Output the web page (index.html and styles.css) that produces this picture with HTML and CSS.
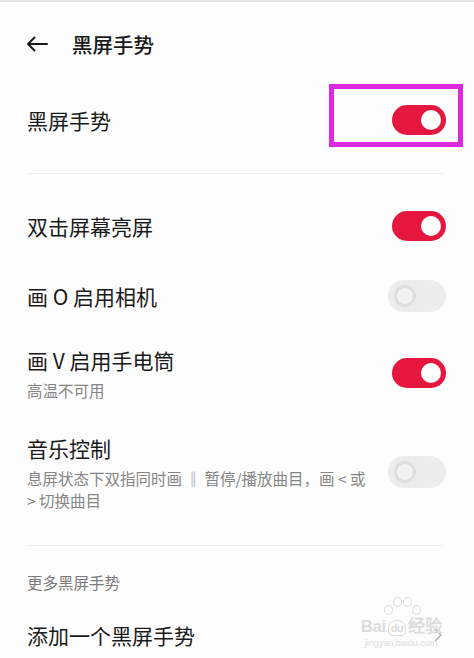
FILE: index.html
```html
<!DOCTYPE html>
<html lang="zh-CN">
<head>
<meta charset="UTF-8">
<meta name="viewport" content="width=device-width, initial-scale=1.0">
<title>黑屏手势</title>
<link rel="stylesheet" href="styles.css">
</head>
<body>
<header class="topbar">
  <svg class="back" width="22" height="16" viewBox="0 0 22 16">
    <path d="M21 8H2M8.5 1.5L2 8l6.5 6.5" fill="none" stroke="#1a1a1a" stroke-width="2" stroke-linecap="round" stroke-linejoin="round"/>
  </svg>
  <h1>黑屏手势</h1>
</header>
<main>
  <div class="row main-row">
    <span class="title">黑屏手势</span>
    <span class="switch on"></span>
    <span class="mark"></span>
  </div>
  <hr class="divider">
  <div class="row">
    <span class="title">双击屏幕亮屏</span>
    <span class="switch on"></span>
  </div>
  <div class="row">
    <span class="title">画 O 启用相机</span>
    <span class="switch off"></span>
  </div>
  <div class="row tall">
    <div class="text">
      <div class="title">画 V 启用手电筒</div>
      <div class="sub">高温不可用</div>
    </div>
    <span class="switch on"></span>
  </div>
  <div class="row tall">
    <div class="text">
      <div class="title">音乐控制</div>
      <div class="sub">息屏状态下双指同时画 ‖ 暂停/播放曲目，画 &lt; 或 &gt; 切换曲目</div>
    </div>
    <span class="switch off"></span>
  </div>
  <hr class="divider second">
  <div class="section-label">更多黑屏手势</div>
  <div class="row link-row">
    <span class="title">添加一个黑屏手势</span>
    <svg class="chevron" width="8" height="14" viewBox="0 0 8 14">
      <path d="M1 1l6 6-6 6" fill="none" stroke="#b0b0b0" stroke-width="1.5"/>
    </svg>
    <div class="watermark">
      <div class="paw">
        <i></i><i></i><i></i><i></i>
      </div>
      <div class="wm-logo">Bai<span class="du">du</span>经验</div>
      <div class="wm-url">jingyan.baidu.com</div>
    </div>
  </div>
</main>
</body>
</html>
```

FILE: styles.css
```css
body {
  margin: 0;
  background: #fdfdfd;
  color: #1a1a1a;
  font-family: "Noto Sans CJK SC", "Noto Sans", sans-serif;
  border-top: 2px solid #e6e6e6;
}
.topbar {
  height: 84px;
  display: flex;
  align-items: center;
  padding-left: 26px;
}
.back {
  margin-right: 24px;
}
.topbar h1 {
  margin: 0;
  font-size: 20.5px;
  font-weight: 500;
  line-height: 30px;
}
main {
  padding: 0 28px 0 27px;
}
.row {
  display: flex;
  align-items: center;
  justify-content: space-between;
  height: 70px;
  position: relative;
}
.main-row {
  height: 68px;
}
.title {
  font-size: 21px;
  line-height: 30px;
}
.row.tall {
  height: auto;
  padding: 14px 0;
}
.row.tall + .row.tall {
  padding: 18px 0 15px;
}
.text {
  width: 347px;
}
.sub {
  margin-top: 4px;
  font-size: 15.5px;
  line-height: 22px;
  color: #858585;
}
.switch {
  flex: none;
  width: 54px;
  height: 30px;
  border-radius: 15px;
  position: relative;
}
.switch::after {
  content: "";
  position: absolute;
  top: 5px;
  width: 20px;
  height: 20px;
  border-radius: 50%;
  box-sizing: border-box;
}
.switch.on {
  background: #e5173e;
}
.switch.on::after {
  right: 5px;
  background: #fff;
}
.switch.off {
  width: 58px;
  height: 32px;
  border-radius: 16px;
  background: #ececec;
}
.switch.off::after {
  top: 5px;
  left: 6px;
  width: 22px;
  height: 22px;
  background: #f2f2f2;
  border: 3px solid #dedede;
}
.mark {
  position: absolute;
  right: -17px;
  top: -2px;
  width: 124px;
  height: 53px;
  border: 5px solid #dd2ae0;
}
.divider {
  margin: 19px 3px 17px 0;
  border: none;
  border-top: 1px solid #efefef;
}
.divider.second {
  margin: 19px 3px 25px 0;
}
.section-label {
  font-size: 15.5px;
  line-height: 22px;
  color: #7a7a7a;
}
.link-row {
  height: 64px;
  margin-top: 10px;
}
.chevron {
  margin-right: 4px;
}
.watermark {
  position: absolute;
  right: 0;
  top: -8px;
  width: 90px;
  color: #dcdcdc;
  text-align: center;
  pointer-events: none;
}
.paw {
  height: 22px;
  position: relative;
}
.paw i {
  position: absolute;
  width: 7px;
  height: 8px;
  border: 1.5px solid #dedede;
  border-radius: 50%;
}
.paw i:nth-child(1) { left: 28px; top: 10px; }
.paw i:nth-child(2) { left: 37px; top: 2px; }
.paw i:nth-child(3) { left: 47px; top: 2px; }
.paw i:nth-child(4) { left: 56px; top: 10px; }
.wm-logo {
  font-family: "Liberation Sans", sans-serif;
  font-size: 17px;
  line-height: 20px;
  font-weight: 700;
  letter-spacing: -0.5px;
}
.wm-logo .du {
  display: inline-block;
  font-size: 11px;
  line-height: 14px;
  padding: 0 2px;
  margin: 0 2px;
  border: 1.5px solid #dedede;
  border-radius: 8px 8px 4px 4px;
}
.wm-url {
  font-family: "Liberation Sans", sans-serif;
  font-size: 9px;
  line-height: 12px;
}
```
